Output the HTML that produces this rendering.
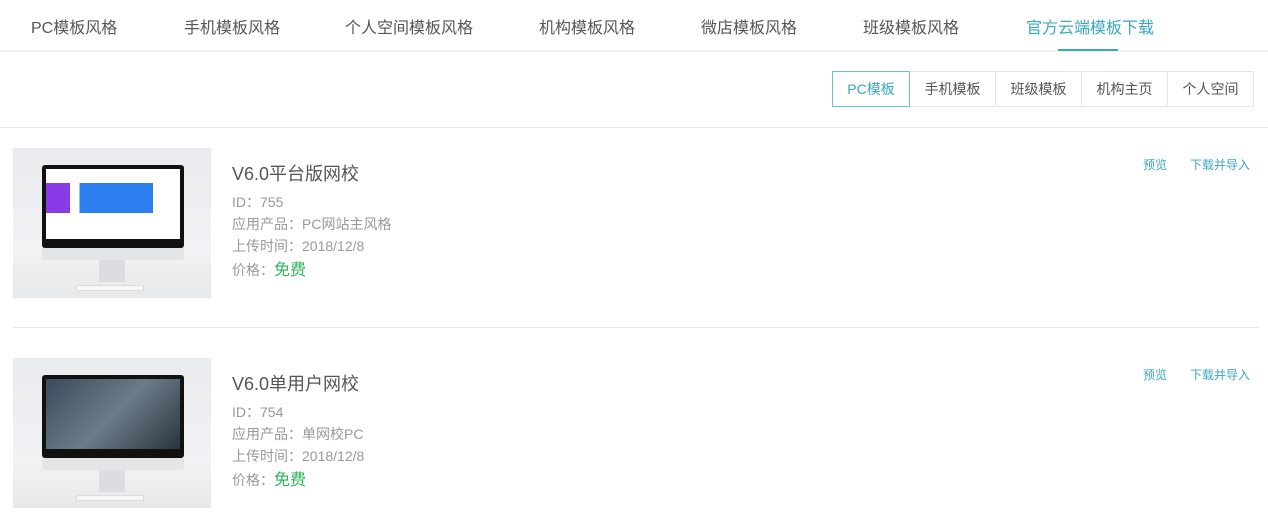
<!DOCTYPE html><html><head><meta charset="utf-8"><style>
*{margin:0;padding:0;box-sizing:border-box}
body{width:1268px;height:519px;overflow:hidden;background:#fff;font-family:"Liberation Sans","Noto Sans CJK SC",sans-serif;position:relative}
.a{position:absolute;white-space:nowrap}
.nav{font-size:16px;color:#555;top:14px}
.tab{position:absolute;top:71px;height:36px;border:1px solid #e3e6e8;font-size:14px;color:#555;text-align:center;line-height:34px}
.img{position:absolute;left:13px;width:198px;height:150px;background:linear-gradient(#e9ebee,#f1f2f4 70%,#e6e8ea);overflow:hidden}
.mon{position:absolute;left:29px;top:17px;width:142px;height:83px;background:#111;border-radius:3px}
.scr{position:absolute;left:4px;top:4px;width:134px;height:70px;background:#fff}
.chin{position:absolute;left:29px;top:100px;width:142px;height:12px;background:#e4e5e7;border-radius:0 0 3px 3px}
.neck{position:absolute;left:86px;top:112px;width:26px;height:22px;background:#dcdde0}
.kb{position:absolute;left:63px;top:137px;width:68px;height:6px;background:#f7f7f8;border:1px solid #ddd}
.t{font-size:18px;color:#555}
.m{font-size:14px;color:#999}
.lk{font-size:12px;color:#3aa8c1}
</style></head><body>
<div class="a nav" style="left:31px">PC模板风格</div>
<div class="a nav" style="left:184px">手机模板风格</div>
<div class="a nav" style="left:345px">个人空间模板风格</div>
<div class="a nav" style="left:539px">机构模板风格</div>
<div class="a nav" style="left:701px">微店模板风格</div>
<div class="a nav" style="left:863px">班级模板风格</div>
<div class="a nav" style="left:1026px;color:#3aa8c1">官方云端模板下载</div>
<div class="a" style="left:0;top:50px;width:1268px;height:2px;background:#eef0f1"></div>
<div class="a" style="left:1058px;top:49px;width:60px;height:2px;background:#3aa8c1"></div>
<div class="tab" style="left:832px;width:78px;border-color:#6fc0d2;color:#3aa8c1;z-index:2">PC模板</div>
<div class="tab" style="left:909px;width:87px">手机模板</div>
<div class="tab" style="left:995px;width:87px">班级模板</div>
<div class="tab" style="left:1081px;width:87px">机构主页</div>
<div class="tab" style="left:1167px;width:87px">个人空间</div>
<div class="a" style="left:0;top:127px;width:1268px;height:1px;background:#e8eaeb"></div>

<div class="img" style="top:148px"><div class="mon"><div class="scr"><div style="position:absolute;left:0;top:14px;width:134px;height:30px;background:linear-gradient(90deg,#8a3be8 0 18%,#fff 18% 25%,#2d7ff0 25% 80%,#fff 80%)"></div></div></div><div class="chin"></div><div class="neck"></div><div class="kb"></div></div>
<div class="a t" style="left:232px;top:160px">V6.0平台版网校</div>
<div class="a m" style="left:232px;top:192px">ID：755</div>
<div class="a m" style="left:232px;top:214px">应用产品：PC网站主风格</div>
<div class="a m" style="left:232px;top:236px">上传时间：2018/12/8</div>
<div class="a m" style="left:232px;top:256px">价格：<span style="color:#2fb45a;font-size:16px">免费</span></div>
<div class="a lk" style="left:1143px;top:156px">预览</div>
<div class="a lk" style="left:1190px;top:156px">下载并导入</div>
<div class="a" style="left:13px;top:327px;width:1246px;height:1px;background:#e8eaeb"></div>

<div class="img" style="top:358px"><div class="mon"><div class="scr" style="background:linear-gradient(135deg,#3a4a5a,#6b7c88 50%,#2a3440)"></div></div><div class="chin"></div><div class="neck"></div><div class="kb"></div></div>
<div class="a t" style="left:232px;top:370px">V6.0单用户网校</div>
<div class="a m" style="left:232px;top:402px">ID：754</div>
<div class="a m" style="left:232px;top:424px">应用产品：单网校PC</div>
<div class="a m" style="left:232px;top:446px">上传时间：2018/12/8</div>
<div class="a m" style="left:232px;top:466px">价格：<span style="color:#2fb45a;font-size:16px">免费</span></div>
<div class="a lk" style="left:1143px;top:366px">预览</div>
<div class="a lk" style="left:1190px;top:366px">下载并导入</div>
</body></html>
